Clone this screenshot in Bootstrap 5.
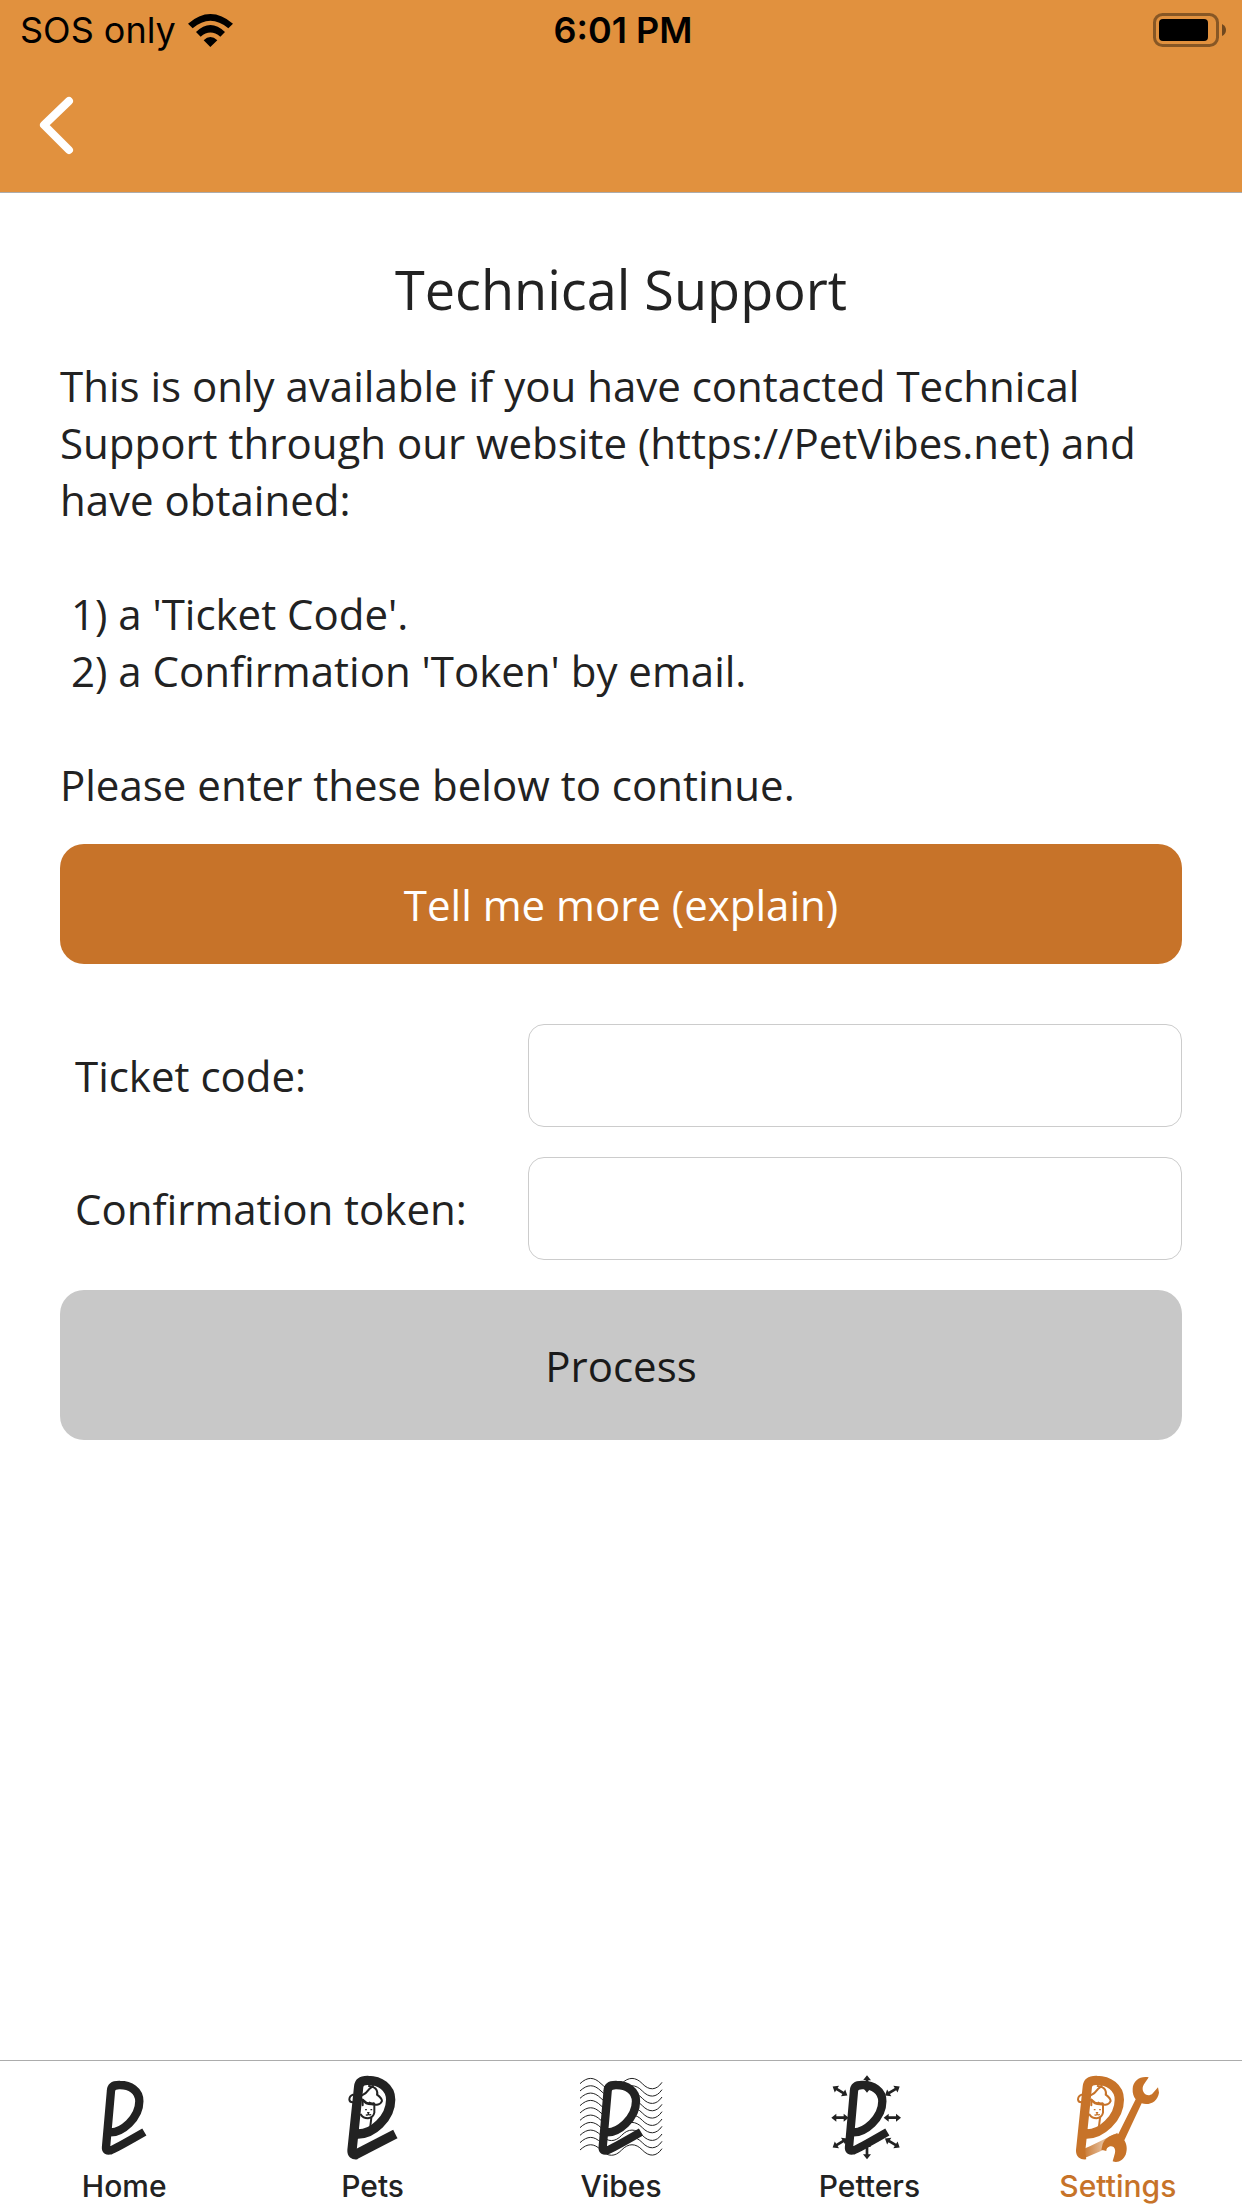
<!DOCTYPE html>
<html lang="en">
<head>
<meta charset="utf-8">
<meta name="viewport" content="width=device-width, initial-scale=1">
<title>Technical Support</title>
<link href="https://cdn.jsdelivr.net/npm/bootstrap@5.3.0/dist/css/bootstrap.min.css" rel="stylesheet">
<style>
  body { font-family: "Open Sans", "Noto Sans", sans-serif; font-size: 42px; line-height: 57px; color: #222; background: #fff; }
  .app-header { background: #e1913e; border-bottom: 1px solid #acacac; }
  .status-row { height: 60px; padding: 0 16px 0 20px; font: 36px/60px Inter, sans-serif; color: #000; }
  .status-row .clock { font-weight: 600; }
  .status-row .wifi { margin-left: 12px; }
  .nav-row { height: 132px; padding-left: 38px; }
  .app-main { padding: 60px 60px 0; }
  .page-title { font-size: 54px; line-height: 72px; font-weight: 400; margin-bottom: 32px; }
  .intro { margin-bottom: 31px; white-space: pre-line; }
  .intro .steps { white-space: pre; }
  .action { font-size: 42px; line-height: 57px; border: 0; border-radius: 24px; }
  .action-explain { background: #c77329; color: #fff; height: 120px; margin-bottom: 60px; }
  .action-process, .action-process:disabled { background: #c8c8c8; color: #1a1a1a; height: 150px; opacity: 1; }
  .field { margin-bottom: 30px; }
  .field-label { flex: 1 1 0; padding-left: 15px; }
  .field-input { flex: 0 0 auto; width: 58.3%; height: 103px; font-size: 42px; border: 1px solid #ccc; border-radius: 16px; padding: 0 24px; }
  .tab-bar { border-top: 1px solid #acacac; background: #fff; }
  .tab-bar a { color: #222; padding: 9px 0 1px; font: 500 30px/42px Inter, sans-serif; }
  .tab-bar a.active { color: #c77329; }
  .tab-bar svg { width: 120px; height: 95px; }
</style>
</head>
<body class="d-flex flex-column min-vh-100">
<svg width="0" height="0" class="position-absolute" aria-hidden="true">
  <defs>
    <path id="letter" d="M150 247C186 249 239 205 239 154C239 122 211 105 181 105Q155 104 154 122L139 292Q138 305 153 301Q162 299 254 246" fill="none" stroke="currentColor" stroke-width="25" stroke-linejoin="round"/>
    <path id="letter-big" d="M140 252C185 254 241 205 241 149C241 112 208 91 174 91Q147 90 145 110L125 301Q124 316 140 314" fill="none" stroke="currentColor" stroke-width="28" stroke-linejoin="round"/>
    <g id="pet-faces" fill="none" stroke="currentColor" stroke-width="6" stroke-linecap="round" stroke-linejoin="round">
      <path d="M128 134Q117 138 117 149Q118 157 127 157M155 136Q166 132 176 118L188 108M176 108Q192 110 198 119Q203 129 200 134Q214 144 215 153Q211 163 200 164Q186 165 178 158"/>
      <path d="M157 150L168 159Q178 163 190 161" stroke-width="8"/>
      <path d="M157 166V149M192 163V188Q189 203 173 205Q158 204 152 194M183 204L180 228"/>
      <path d="M166 179H168M182 179H184M172 188H176M174 190V193M168 195Q172 196 174 193Q177 196 181 194" stroke-width="4"/>
    </g>
    <path id="wave" d="M75 101C97 80 117 80 138 101S180 122 200 101S242 80 262 101S304 122 321 97" fill="none" stroke="currentColor" stroke-width="3"/>
    <path id="arrow" d="M-26 0L-11 -12V-4H11V-12L26 0L11 12V4H-11V12Z" fill="currentColor"/>
  </defs>
</svg>

<header class="app-header">
  <div class="status-row row g-0 align-items-center">
    <div class="col d-flex align-items-center">
      <span>SOS only</span>
      <svg class="wifi" width="45" height="33" viewBox="0 0 135 99" aria-label="Wi-Fi"><path d="M0 29Q67-29 135 29L121 43Q67-2 14 43ZM24 54Q67 12 111 54L97 68Q67 43 38 68ZM47 79Q67 59 88 79L67 99Z"/></svg>
    </div>
    <div class="col-auto clock">6:01 PM</div>
    <div class="col d-flex justify-content-end">
      <svg width="73" height="34" viewBox="0 0 73 34" aria-label="Battery full"><rect x="1.500" y="1.500" width="63" height="31" rx="8" fill="none" stroke="#000" stroke-opacity=".4" stroke-width="3"/><rect x="6" y="6" width="49" height="22" rx="4"/><path d="M69 11Q73 13 73 17T69 23Z" fill-opacity=".5"/></svg>
    </div>
  </div>
  <nav class="nav-row d-flex align-items-center" aria-label="Back">
    <a href="#" class="d-flex" aria-label="Back"><svg width="37" height="60" viewBox="0 0 37 60"><path d="M31 5L6 29L31 54" fill="none" stroke="#fff" stroke-width="8" stroke-linecap="round" stroke-linejoin="round"/></svg></a>
  </nav>
</header>

<main class="app-main flex-grow-1">
  <h1 class="page-title text-center">Technical Support</h1>
  <div class="intro">This is only available if you have contacted Technical Support through our website (https://PetVibes.net) and have obtained:

<span class="steps"> 1) a 'Ticket Code'.
 2) a Confirmation 'Token' by email.</span>

Please enter these below to continue.</div>
  <button type="button" class="btn action action-explain w-100">Tell me more (explain)</button>
  <form>
    <div class="field d-flex align-items-center">
      <label class="field-label" for="ticket">Ticket code:</label>
      <input class="form-control field-input" id="ticket" type="text">
    </div>
    <div class="field d-flex align-items-center">
      <label class="field-label" for="token">Confirmation token:</label>
      <input class="form-control field-input" id="token" type="text">
    </div>
    <button type="submit" class="btn action action-process w-100" disabled>Process</button>
  </form>
</main>

<nav class="tab-bar nav nav-fill flex-nowrap" aria-label="Main">
  <a href="#" class="col d-flex flex-column align-items-center text-decoration-none">
    <svg viewBox="13 60 360 285"><use href="#letter"/></svg>Home</a>
  <a href="#" class="col d-flex flex-column align-items-center text-decoration-none">
    <svg viewBox="8 60 360 285"><use href="#letter-big"/><path d="M133 315L255 252" stroke="currentColor" stroke-width="28"/><use href="#pet-faces"/></svg>Pets</a>
  <a href="#" class="col d-flex flex-column align-items-center text-decoration-none">
    <svg viewBox="18 60 360 285">
      <use href="#wave"/><use href="#wave" y="22"/><use href="#wave" y="44"/><use href="#wave" y="66"/><use href="#wave" y="88"/><use href="#wave" y="110"/><use href="#wave" y="132"/><use href="#wave" y="155"/><use href="#wave" y="177"/><use href="#wave" y="199"/>
      <path d="M158 246C190 249 243 205 243 154C243 122 215 105 185 105Q159 104 158 122Z" fill="#fff"/>
      <use href="#letter" x="4"/></svg>Vibes</a>
  <a href="#" class="col d-flex flex-column align-items-center text-decoration-none">
    <svg viewBox="28 60 360 285">
      <use href="#arrow" transform="translate(202 102) rotate(90)"/><use href="#arrow" transform="translate(202 302) rotate(90)"/>
      <use href="#arrow" transform="translate(121 203)"/><use href="#arrow" transform="translate(278 203)"/>
      <use href="#arrow" transform="translate(121 123) rotate(32)"/><use href="#arrow" transform="translate(278 279) rotate(32)"/>
      <use href="#arrow" transform="translate(121 279) rotate(-32)"/><use href="#arrow" transform="translate(278 123) rotate(-32)"/>
      <use href="#letter" x="9"/></svg>Petters</a>
  <a href="#" class="active col d-flex flex-column align-items-center text-decoration-none" aria-current="page">
    <svg viewBox="53 60 360 285">
      <defs><linearGradient id="fade" x1="125" y1="0" x2="235" y2="0" gradientUnits="userSpaceOnUse"><stop offset="0" stop-color="#c77329"/><stop offset=".55" stop-color="#c77329" stop-opacity=".5"/><stop offset="1" stop-color="#c77329"/></linearGradient></defs>
      <path d="M126 327L114 304L150 288L232 248L228 276L187 301Z" fill="url(#fade)"/>
      <use href="#letter-big" x="-4"/><use href="#pet-faces" x="-4"/>
      <path d="M325 82C300 77 278 92 277 116C276 130 280 140 286 148L234 252C215 252 195 262 187 282L183 299L198 303C198 286 222 284 224 299C226 308 221 317 217 334C234 340 248 330 256 314C262 298 259 282 252 271L304 160C328 167 352 155 356 128L353 112L336 131C324 141 308 133 307 118C306 105 317 96 325 82Z" fill="currentColor"/>
    </svg>Settings</a>
</nav>
<script src="https://cdn.jsdelivr.net/npm/bootstrap@5.3.0/dist/js/bootstrap.bundle.min.js"></script>
</body>
</html>
